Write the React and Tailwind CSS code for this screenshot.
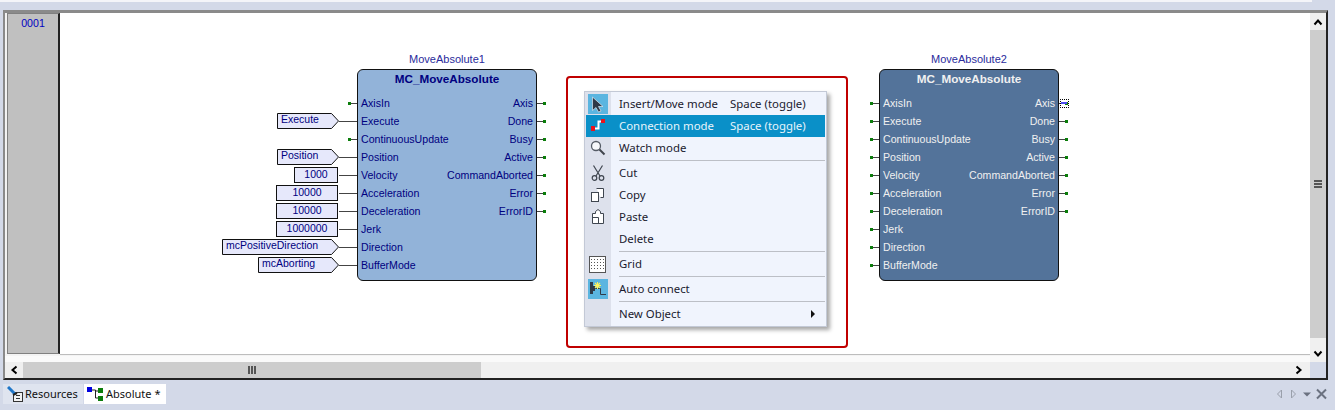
import React from 'react'

const inputs = ['AxisIn', 'Execute', 'ContinuousUpdate', 'Position', 'Velocity', 'Acceleration', 'Deceleration', 'Jerk', 'Direction', 'BufferMode']
const outputs = ['Axis', 'Done', 'Busy', 'Active', 'CommandAborted', 'Error', 'ErrorID']

// constants wired to the first block, keyed by input name
const constants = {
  Execute: { text: 'Execute', width: 62, arrow: true },
  Position: { text: 'Position', width: 62, arrow: true },
  Velocity: { text: '1000', width: 45 },
  Acceleration: { text: '10000', width: 63 },
  Deceleration: { text: '10000', width: 63 },
  Jerk: { text: '1000000', width: 63 },
  Direction: { text: 'mcPositiveDirection', width: 117, arrow: true },
  BufferMode: { text: 'mcAborting', width: 81, arrow: true },
}

const Pin = ({ side }) => (
  <div className={`absolute top-[9px] flex h-px w-[9px] items-center bg-[#444444] ${side === 'left' ? '-left-[9px] justify-start' : '-right-[9px] justify-end'}`}>
    <div className="h-[3px] w-[3px] shrink-0 bg-[#0b7d0b]" />
  </div>
)

const Constant = ({ text, width, arrow }) => (
  <div className="absolute -left-[140px] top-0 flex h-[18px] w-[140px] items-center justify-end text-[10.5px]">
    {arrow ? (
      <div className="relative flex h-[16px] shrink-0 items-center pl-[4px] text-[#000080]" style={{ width }}>
        <svg className="absolute left-0 top-0" width={width} height="16" viewBox={`0 0 ${width} 16`}>
          <path d={`M.5 .5H${width - 7.5}L${width - 0.5} 8L${width - 7.5} 15.5H.5Z`} fill="#e6e8fb" stroke="#111111" />
        </svg>
        <span className="relative -top-px">{text}</span>
      </div>
    ) : (
      <div className="mr-[1px] flex h-[16px] shrink-0 items-center justify-center border border-[#111111] bg-[#e6e8fb] text-[#000080]" style={{ width: width - 1 }}>
        {text}
      </div>
    )}
    <div className="h-px w-[18px] shrink-0 bg-[#444444]" />
  </div>
)

const Block = ({ name, x, dark, wired }) => (
  <div className="absolute top-[56px] h-[212px] w-[180px]" style={{ left: x }}>
    <div className="absolute -top-[18px] left-0 right-0 text-center text-[#2a2a9c]">{name}</div>
    <div className={`flex h-full flex-col rounded-[6px] border border-[#111111] text-[10.6px] ${dark ? 'bg-[#53739a] text-[#f0f0f0]' : 'bg-[#92b3d9] text-[#000080]'}`}>
      <div className="mb-[7px] mt-[1px] h-[16px] text-center text-[11.7px] font-bold leading-[16px]">MC_MoveAbsolute</div>
      <div className="flex justify-between px-[3px]">
        <div className="flex w-[70px] flex-col whitespace-nowrap">
          {inputs.map((label) => (
            <div key={label} className="relative h-[18px] leading-[18px]">
              <span>{label}</span>
            </div>
          ))}
        </div>
        <div className="flex flex-col items-end whitespace-nowrap">
          {outputs.map((label) => (
            <div key={label} className="h-[18px] leading-[18px]">{label}</div>
          ))}
        </div>
      </div>
    </div>
    <div className="absolute left-0 top-[25px] flex flex-col">
      {inputs.map((label) => (
        <div key={label} className="relative h-[18px]">
          {wired && constants[label] ? <Constant {...constants[label]} /> : <Pin side="left" />}
        </div>
      ))}
    </div>
    <div className="absolute right-0 top-[25px] flex flex-col">
      {outputs.map((label) => (
        <div key={label} className="relative h-[18px]">
          <Pin side="right" />
          {dark && label === 'Axis' && (
            <div className="absolute -right-[10px] top-[5px] h-[9px] w-[9px] rounded-[1px] border border-dotted border-black">
              <div className="mt-[2px] h-[2px] w-[6px] bg-[#4b4bf0]" />
            </div>
          )}
        </div>
      ))}
    </div>
  </div>
)

const icons = {
  cursor: (
    <div className="h-[20px] w-[20px] bg-[#5bb5e0]">
      <svg width="20" height="20" viewBox="0 0 20 20">
        <path d="M4.5 3V16.5L8 13.5L10.5 18L13 17L10.5 12.5H15Z" fill="#2f3a48" stroke="#dfe9f2" strokeWidth=".7" />
      </svg>
    </div>
  ),
  connect: (
    <svg width="20" height="20" viewBox="0 0 20 20">
      <path d="M7 12.5H10.5V5.5H13" fill="none" stroke="#ffffff" strokeWidth="2" />
      <rect x="3" y="10" width="4" height="5" fill="#e8141c" />
      <rect x="13" y="3" width="4" height="4" fill="#e8141c" />
    </svg>
  ),
  search: (
    <svg width="18" height="18" viewBox="0 0 18 18">
      <circle cx="7" cy="7" r="4.5" fill="#f6f8fb" stroke="#555c66" strokeWidth="1.3" />
      <path d="M10.5 10.5L15.5 15.5" stroke="#3f444c" strokeWidth="2" />
    </svg>
  ),
  cut: (
    <svg width="16" height="18" viewBox="0 0 16 18">
      <path d="M3.5 1.5L10 12M12.5 1.5L6 12" fill="none" stroke="#3f4650" strokeWidth="1.2" />
      <circle cx="4.5" cy="14" r="2.3" fill="none" stroke="#3f4650" strokeWidth="1.2" />
      <circle cx="11.5" cy="14" r="2.3" fill="none" stroke="#3f4650" strokeWidth="1.2" />
    </svg>
  ),
  copy: (
    <svg width="16" height="16" viewBox="0 0 16 16">
      <path d="M6.5 1.5H13.5V10.5H10.5" fill="#ffffff" stroke="#3f4650" />
      <rect x="1.5" y="5.5" width="7" height="9" fill="#ffffff" stroke="#3f4650" />
    </svg>
  ),
  paste: (
    <svg width="16" height="18" viewBox="0 0 16 18">
      <path d="M2.5 15.5V5.5H5.5V3.5L8 1.5L10.5 3.5V5.5H13.5V15.5Z" fill="#ffffff" stroke="#3f4650" />
      <path d="M8.5 15.5V9.5H2.5" fill="none" stroke="#3f4650" />
    </svg>
  ),
  grid: (
    <svg width="17" height="17" viewBox="0 0 17 17">
      <rect x=".5" y=".5" width="16" height="16" fill="#ffffff" stroke="#555555" />
      <path d="M2 3.5H15M2 6.5H15M2 9.5H15M2 12.5H15" stroke="#555555" strokeDasharray="1 2" />
    </svg>
  ),
  auto: (
    <div className="h-[20px] w-[20px] bg-[#5bb5e0]">
      <svg width="20" height="20" viewBox="0 0 20 20">
        <rect x="2" y="3" width="3" height="12" fill="#2f3a48" />
        <rect x="5" y="7" width="2" height="5" fill="#2f3a48" />
        <path d="M7 9.5H12.5V15.5H18" fill="none" stroke="#2f3a48" />
        <path d="M9.5 3V10M6 6.5H13M7 4L12 9M12 4L7 9" stroke="#fff45c" strokeWidth="1.1" />
      </svg>
    </div>
  ),
}

const menu = [
  { label: 'Insert/Move mode', hint: 'Space (toggle)', icon: 'cursor' },
  { label: 'Connection mode', hint: 'Space (toggle)', icon: 'connect', active: true },
  { label: 'Watch mode', icon: 'search' },
  { sep: true },
  { label: 'Cut', icon: 'cut' },
  { label: 'Copy', icon: 'copy' },
  { label: 'Paste', icon: 'paste' },
  { label: 'Delete' },
  { sep: true },
  { label: 'Grid', icon: 'grid' },
  { sep: true },
  { label: 'Auto connect', icon: 'auto' },
  { sep: true },
  { label: 'New Object', more: true },
]

const ContextMenu = () => (
  <div
    className="absolute left-[524px] top-[78px] w-[243px] border border-[#c3c9d6] bg-[linear-gradient(to_right,#dde1ec_26px,#f0f4fd_26px)] py-px pr-px text-[11.4px] text-[#1a1a2e] shadow-[3px_3px_4px_rgba(0,0,0,0.35)]"
    style={{ fontFamily: '"Noto Sans", sans-serif' }}
  >
    {menu.map((item, i) =>
      item.sep ? (
        <div key={i} className="flex h-[3px] items-center pl-[34px]">
          <div className="h-[1px] w-full bg-[#bcbfc6]" />
        </div>
      ) : (
        <div key={i} className={`ml-px flex h-[22px] items-center ${item.active ? 'bg-[#0a90c8] text-[#e8f4fb]' : ''}`}>
          <div className="flex w-[22px] shrink-0 justify-center pl-px">{icons[item.icon]}</div>
          <div className="ml-[11px] w-[111px] shrink-0">{item.label}</div>
          <div>{item.hint}</div>
          {item.more && <div className="ml-[81px] h-0 w-0 border-y-[4px] border-l-[4px] border-y-transparent border-l-[#111111]" />}
        </div>
      )
    )}
  </div>
)

const Chevron = ({ rotate }) => (
  <svg width="10" height="8" viewBox="0 0 10 8" className={rotate}>
    <path d="M1.5 6.5L5 2.5L8.5 6.5" fill="none" stroke="#000000" strokeWidth="2" />
  </svg>
)

const Grip = ({ vertical }) => (
  <div className={`flex gap-[1px] ${vertical ? 'flex-col' : ''}`}>
    {[0, 1, 2].map((i) => (
      <div key={i} className={`bg-[#555555] ${vertical ? 'h-[2px] w-[8px]' : 'h-[8px] w-[2px]'}`} />
    ))}
  </div>
)

const ResourcesIcon = () => (
  <svg width="17" height="17" viewBox="0 0 17 17" className="shrink-0">
    <rect x="6.5" y="6.5" width="9" height="9" fill="#f2f2f2" stroke="#333333" />
    <path d="M9 9.5H13M9 12.5H13" stroke="#333333" />
    <path d="M1 1L8 8" stroke="#1f76c8" strokeWidth="3" />
    <path d="M6 9L10 7" stroke="#222222" strokeWidth="2" />
  </svg>
)

const AbsoluteIcon = () => (
  <svg width="17" height="14" viewBox="0 0 17 14" className="shrink-0">
    <rect x="0" y="0" width="5" height="5" fill="#0000e0" />
    <rect x="11" y="1" width="5" height="5" fill="#0b7d0b" />
    <rect x="11" y="9" width="5" height="5" fill="#0b7d0b" />
    <path d="M5 3H8.5V11H11M8.5 4H11" fill="none" stroke="#222222" />
  </svg>
)

export default function App() {
  return (
    <div className="flex h-[410px] w-[1335px] flex-col overflow-hidden bg-[#d3d9e8] text-[11px]" style={{ fontFamily: '"Liberation Sans", Arial, sans-serif' }}>
      <div className="h-[2px] w-[1312px] shrink-0 bg-[#f4f5f9]" />
      <div className="h-[8px] shrink-0" />

      {/* Editor frame */}
      <div className="ml-[3px] mr-[7px] flex h-[370px] shrink-0 flex-col border-b-2 border-l-2 border-r-2 border-t-[3px] border-b-[#222222] border-l-[#8a8a8a] border-r-[#222222] border-t-[#8a8a8a] bg-[#f3f3f3]">
        <div className="flex h-[349px] shrink-0">
          <div className="flex min-w-0 flex-1 flex-col">
            <div className="flex h-[343px] shrink-0">
              <div className="w-[2px] shrink-0 bg-[#f3f3f3]" />
              <div className="flex h-[341px] w-[53px] shrink-0 justify-center border-b border-l border-r-2 border-t border-b-[#808080] border-l-[#808080] border-r-[#222222] border-t-[#808080] bg-[#c0c0c0] pt-[3px] text-[10.6px] leading-[12px] text-[#0000c0]">
                0001
              </div>

              {/* Diagram canvas: block positions are the content here */}
              <div className="relative h-[342px] flex-1 border-b border-[#bdbdbd] bg-white">
                <Block name="MoveAbsolute1" x={297} wired />
                <Block name="MoveAbsolute2" x={819} dark />
                <div className="absolute left-[506px] top-[63px] h-[272px] w-[282px] rounded-[4px] border-2 border-[#c00000]" />
                <ContextMenu />
              </div>
            </div>
            <div className="h-[6px] shrink-0 bg-[#fafafa]" />
          </div>

          {/* Vertical scrollbar */}
          <div className="flex w-[16px] shrink-0 flex-col bg-[#f0f0f0]">
            <div className="flex h-[17px] shrink-0 items-center justify-center bg-[#efefef]">
              <Chevron />
            </div>
            <div className="flex h-[308px] shrink-0 items-center justify-center bg-[#cdcdcd]">
              <Grip vertical />
            </div>
            <div className="flex-1" />
            <div className="flex h-[17px] shrink-0 items-center justify-center">
              <Chevron rotate="rotate-180" />
            </div>
          </div>
        </div>

        {/* Horizontal scrollbar */}
        <div className="flex h-[16px] shrink-0">
          <div className="flex w-[18px] shrink-0 items-center justify-center bg-[#efefef]">
            <Chevron rotate="-rotate-90" />
          </div>
          <div className="flex w-[458px] shrink-0 items-center justify-center bg-[#cdcdcd]">
            <Grip />
          </div>
          <div className="flex flex-1 items-center justify-end bg-[#f0f0f0] pr-[6px]">
            <Chevron rotate="rotate-90" />
          </div>
          <div className="w-[16px] shrink-0 bg-[#d3d9e8]" />
        </div>
      </div>

      {/* Bottom tabs */}
      <div className="ml-[3px] mt-[3px] flex h-[22px] items-center">
        <div className="flex h-[20px] w-[80px] items-center gap-[1px] whitespace-nowrap bg-[#dfe4ef] pl-[4px] text-[11px] text-[#111111]" style={{ fontFamily: '"Noto Sans", sans-serif' }}>
          <ResourcesIcon />
          Resources
        </div>
        <div className="ml-px flex h-[20px] w-[82px] items-center gap-[2px] whitespace-nowrap bg-white pl-[3px] text-[11px] text-[#111111]" style={{ fontFamily: '"Noto Sans", sans-serif' }}>
          <AbsoluteIcon />
          Absolute *
        </div>
        <div className="ml-auto mr-[3px] flex items-center">
          <svg width="56" height="12" viewBox="0 0 56 12">
            <path d="M5.5 2L1.5 6L5.5 10Z" fill="#d3d9e8" stroke="#9aa0ab" />
            <path d="M15.5 2L19.5 6L15.5 10Z" fill="#d3d9e8" stroke="#9aa0ab" />
            <path d="M27 4.5H35L31 8.5Z" fill="#6b7280" />
            <path d="M41 1.5L50 10.5M50 1.5L41 10.5" stroke="#6b7280" strokeWidth="2" />
          </svg>
        </div>
      </div>
    </div>
  )
}
